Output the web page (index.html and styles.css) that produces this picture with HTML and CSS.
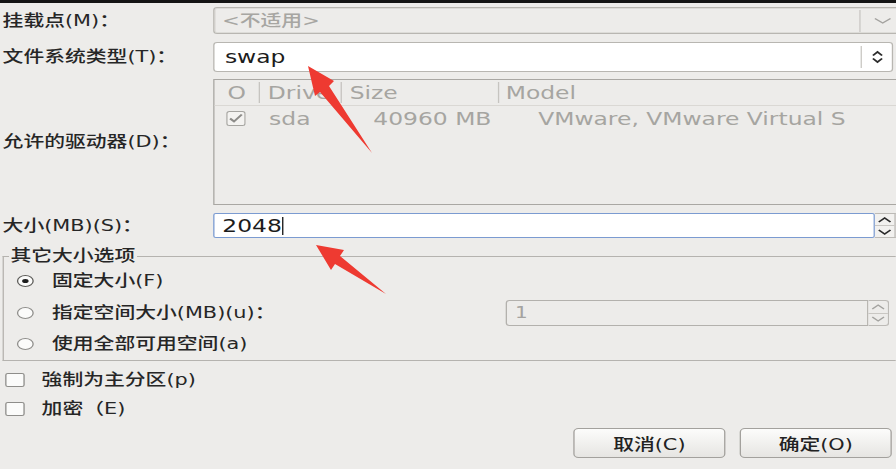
FILE: index.html
```html
<!DOCTYPE html>
<html lang="zh-CN">
<head>
    <meta charset="UTF-8">
    <title>添加分区</title>
    <link rel="stylesheet" href="styles.css">
</head>
<body>
    <div class="topbar"></div>
    <div class="dialog">
        <div class="row row-mount">
            <label class="label">挂载点(M)：</label>
            <div class="combo combo-off">
                <span class="combo-text">&lt;不适用&gt;</span>
                <span class="combo-sep"></span>
                <span class="combo-btn">
                    <svg width="14" height="8" viewBox="0 0 14 8"><path d="M1 1.5 L7 6 L13 1.5" fill="none" stroke="#a3a29f" stroke-width="1.2"/></svg>
                </span>
            </div>
        </div>
        <div class="row row-fs">
            <label class="label">文件系统类型(T)：</label>
            <div class="combo combo-on">
                <span class="combo-text">swap</span>
                <span class="combo-sep"></span>
                <span class="combo-btn combo-btn-sm">
                    <svg width="10" height="14" viewBox="0 0 10 14"><path d="M1.5 5.5 L5 2 L8.5 5.5 M1.5 8.5 L5 12 L8.5 8.5" fill="none" stroke="#2b2b2b" stroke-width="1.6"/></svg>
                </span>
            </div>
        </div>
        <div class="row row-drives">
            <label class="label">允许的驱动器(D)：</label>
            <div class="drives">
                <div class="drives-head">
                    <span class="col col-check">O</span>
                    <span class="col col-drive">Drive</span>
                    <span class="col col-size">Size</span>
                    <span class="col col-model">Model</span>
                </div>
                <div class="drives-row">
                    <span class="col col-check">
                        <svg width="15" height="15" viewBox="0 0 15 15"><rect x="0.5" y="0.5" width="14" height="14" rx="2" fill="#f4f3f1" stroke="#a6a5a1"/><path d="M3 7.5 L6 10.5 L12 3.5" fill="none" stroke="#8d8c89" stroke-width="1.8"/></svg>
                    </span>
                    <span class="col col-drive">sda</span>
                    <span class="col col-size">40960 MB</span>
                    <span class="col col-model">VMware, VMware Virtual S</span>
                </div>
            </div>
        </div>
        <div class="row row-size">
            <label class="label">大小(MB)(S)：</label>
            <div class="spin spin-on">
                <div class="spin-input">2048<span class="caret"></span></div>
                <div class="spin-btns">
                    <span><svg width="11" height="6" viewBox="0 0 11 6"><path d="M1 5 L5.5 1 L10 5" fill="none" stroke="#2b2b2b" stroke-width="1.5"/></svg></span>
                    <span><svg width="11" height="6" viewBox="0 0 11 6"><path d="M1 1 L5.5 5 L10 1" fill="none" stroke="#2b2b2b" stroke-width="1.5"/></svg></span>
                </div>
            </div>
        </div>

        <fieldset class="options">
            <legend>其它大小选项</legend>
            <div class="option">
                <span class="radio checked"></span>
                <span>固定大小(F)</span>
            </div>
            <div class="option option-spin">
                <span class="radio"></span>
                <span>指定空间大小(MB)(u)：</span>
                <div class="spin spin-off">
                    <div class="spin-input">1</div>
                    <div class="spin-btns">
                        <span><svg width="11" height="6" viewBox="0 0 11 6"><path d="M1 5 L5.5 1 L10 5" fill="none" stroke="#a4a3a0" stroke-width="1.2"/></svg></span>
                        <span><svg width="11" height="6" viewBox="0 0 11 6"><path d="M1 1 L5.5 5 L10 1" fill="none" stroke="#a4a3a0" stroke-width="1.2"/></svg></span>
                    </div>
                </div>
            </div>
            <div class="option">
                <span class="radio"></span>
                <span>使用全部可用空间(a)</span>
            </div>
        </fieldset>

        <div class="check-row check-first">
            <span class="checkbox"></span>
            <span>強制为主分区(p)</span>
        </div>
        <div class="check-row">
            <span class="checkbox"></span>
            <span>加密（E)</span>
        </div>

        <div class="buttons">
            <button class="btn">取消(C)</button>
            <button class="btn">确定(O)</button>
        </div>
    </div>

    <svg class="marks" width="896" height="469" viewBox="0 0 896 469">
        <polygon points="308,66 334,81 329,86 372,153 320,92 315,96" fill="#ee3a31"/>
        <polygon points="316,245 344,250 340,256 386,294 335,264 331,270" fill="#ee3a31"/>
    </svg>
</body>
</html>
```

FILE: styles.css
```css
body {
    margin: 0;
    width: 896px;
    height: 469px;
    overflow: hidden;
    position: relative;
    background: #edecea;
    color: #262626;
    font-family: "DejaVu Sans", "Noto Sans CJK SC", sans-serif;
    font-size: 16px;
    font-weight: 500;
    line-height: 1.2;
}

.topbar {
    height: 3px;
    background: #141414;
}

/* the screenshot is stretched sideways, so the whole dialog is too */
.dialog {
    width: 689px;
    transform: scaleX(1.3);
    transform-origin: 0 0;
}

.row {
    display: flex;
    align-items: center;
}

.label {
    width: 162px;
    padding-left: 2px;
    flex: none;
}

.row-mount {
    margin-top: 4px;
}

.row-fs {
    margin-top: 8px;
}

.row-drives {
    margin-top: 7px;
}

.row-size {
    margin-top: 8px;
}

.combo {
    flex: 1;
    display: flex;
    align-items: center;
    box-sizing: border-box;
    border: 1px solid #b8b6b1;
    border-radius: 3px;
}

.combo-off {
    height: 27px;
    margin-right: -6px;
    color: #a7a6a2;
    box-shadow: inset 0 0 0 1px #dddcd8;
}

.combo-on {
    height: 30px;
    margin-right: 2px;
    background: #fff;
    font-size: 18px;
    color: #1c1c1c;
}

.combo-text {
    flex: 1;
    padding-left: 6px;
}

.combo-on .combo-text {
    padding-left: 8px;
}

.combo-sep {
    width: 1px;
    height: 22px;
    background: #c9c7c3;
}

.combo-off .combo-sep {
    margin-right: 2px;
}

.combo-btn {
    width: 30px;
    display: flex;
    justify-content: center;
}

.combo-btn-sm {
    width: 23px;
}

.drives {
    flex: 1;
    height: 126px;
    box-sizing: border-box;
    margin-right: -10px;
    border: 1px solid #a9a7a3;
    color: #a6a5a1;
    font-size: 18px;
    font-weight: normal;
}

.drives-head,
.drives-row {
    display: flex;
    align-items: center;
    height: 25px;
}

.drives-head {
    border-bottom: 1px solid #dad8d4;
}

.col {
    flex: none;
    white-space: nowrap;
    overflow: hidden;
}

.col-check {
    width: 34px;
    padding-left: 10px;
    box-sizing: border-box;
}

.col-drive {
    width: 63px;
    padding-left: 6px;
    box-sizing: border-box;
}

.col-size {
    width: 121px;
    padding-left: 6px;
    box-sizing: border-box;
}

.col-model {
    padding-left: 5px;
}

.drives-head .col + .col {
    border-left: 1px solid #c6c4c0;
}

.drives-row {
    margin-top: 0;
}

.drives-row .col-check {
    padding-left: 9px;
    display: flex;
}

.drives-row .col-drive {
    padding-left: 8px;
}

.drives-row .col-size {
    text-align: right;
    padding-right: 5px;
}

.drives-row .col-model {
    padding-left: 31px;
}

.spin {
    display: flex;
    box-sizing: border-box;
}

.spin-input {
    flex: 1;
    display: flex;
    align-items: center;
    box-sizing: border-box;
    font-size: 18px;
}

.spin-on {
    flex: 1;
    height: 25px;
}

.spin-on .spin-input {
    background: #fff;
    border: 1px solid #7b9bd1;
    border-radius: 2px;
    padding-left: 6px;
    color: #1c1c1c;
}

.caret {
    display: inline-block;
    width: 1px;
    height: 18px;
    background: #111;
}

.spin-btns {
    width: 16px;
    display: flex;
    flex-direction: column;
    box-sizing: border-box;
    border: 1px solid #bcbab6;
    border-left: none;
    background: #f2f1ef;
}

.spin-btns span {
    flex: 1;
    display: flex;
    align-items: center;
    justify-content: center;
}

.spin-btns span + span {
    border-top: 1px solid #c9c7c3;
}

.options {
    margin: 9px 0 0 2px;
    padding: 0 0 4px 4px;
    border: 1px solid #b5b3af;
    border-right: none;
}

.options legend {
    padding: 0 1px;
    line-height: 18px;
}

.option {
    display: flex;
    align-items: center;
    height: 24px;
    padding-left: 6px;
}

.option:first-of-type {
    margin-top: 4px;
}

.option-spin {
    height: 26px;
    margin-top: 7px;
}

.option-spin + .option {
    margin-top: 6px;
}

.radio {
    width: 13px;
    height: 12px;
    box-sizing: border-box;
    border: 1px solid #8e8d8a;
    border-radius: 50%;
    background: #fbfbfa;
    margin-right: 14px;
    position: relative;
}

.radio.checked {
    border-color: #5d5c59;
}

.radio.checked::after {
    content: '';
    position: absolute;
    top: 3px;
    left: 3px;
    width: 5px;
    height: 4px;
    border-radius: 50%;
    background: #1d1d1d;
}

.spin-off {
    width: 295px;
    height: 26px;
    margin-left: auto;
    margin-right: 5px;
}

.spin-off .spin-input {
    border: 1px solid #b3b1ad;
    border-radius: 3px 0 0 3px;
    padding-left: 6px;
    color: #a4a3a0;
    font-family: "DejaVu Sans Mono", monospace;
    font-size: 16px;
    font-weight: normal;
}

.spin-off .spin-btns {
    border-radius: 0 3px 3px 0;
    background: #edecea;
}

.check-row {
    display: flex;
    align-items: center;
    height: 24px;
    margin-top: 5px;
    padding-left: 4px;
}

.check-first {
    margin-top: 7px;
}

.checkbox {
    width: 15px;
    height: 14px;
    box-sizing: border-box;
    border: 1px solid #8e8d8a;
    border-radius: 2px;
    background: #fbfbfa;
    margin-right: 13px;
}

.buttons {
    display: flex;
    justify-content: flex-end;
    gap: 11px;
    margin-top: 7px;
    padding-right: 3px;
}

.btn {
    width: 117px;
    height: 30px;
    border: 1px solid #a3a19d;
    border-radius: 4px;
    background: linear-gradient(#fcfcfb, #e6e5e2);
    color: #222;
    font-family: inherit;
    font-size: 16px;
    font-weight: 500;
}

.marks {
    position: absolute;
    top: 0;
    left: 0;
    pointer-events: none;
}
```
